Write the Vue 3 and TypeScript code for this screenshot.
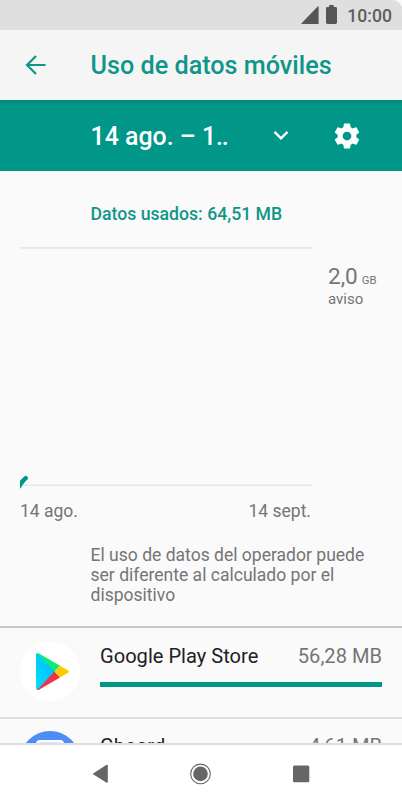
<script setup lang="ts">
interface AppUsage {
  name: string
  amount: string
  share: number
  icon: 'play' | 'keyboard'
}

const apps: AppUsage[] = [
  { name: 'Google Play Store', amount: '56,28 MB', share: 100, icon: 'play' },
  { name: 'Gboard', amount: '4,61 MB', share: 8, icon: 'keyboard' },
]
</script>

<template>
  <div class="screen">
    <div class="status">
      <svg class="signal" width="18" height="18" viewBox="0 0 18 18"><path d="M17.6 0.6V18H0.9Q0 18 .6 17.3L16.4 .7Q17.6 -.2 17.6 .6z" /></svg>
      <svg class="battery" width="11" height="19" viewBox="0 0 11 19"><path d="M3.1 0h4.6v2H9.6Q11 2 11 3.3V17.6Q11 19 9.6 19H1.4Q0 19 0 17.6V3.3Q0 2 1.4 2H3.1z" /></svg>
      <span class="clock">10:00</span>
    </div>

    <header class="appbar">
      <svg class="back" width="22" height="22" viewBox="0 0 22 22"><path d="M20.5 11H2.2M11 1.900L2 11l9 9.100" /></svg>
      <h1>Uso de datos móviles</h1>
    </header>

    <div class="cycle">
      <span class="range">14 ago. – 1<span class="dots">..</span></span>
      <svg class="chevron" width="16" height="11" viewBox="0 0 16 11"><path d="M1.5 1.8L8 8.3l6.500-6.500" /></svg>
      <svg class="gear" width="30" height="30" viewBox="0 0 24 24"><path d="M19.430 12.980c.04-.32.07-.64.07-.98s-.03-.66-.07-.98l2.110-1.650c.19-.15.24-.42.12-.64l-2-3.460c-.12-.22-.39-.3-.61-.22l-2.490 1c-.52-.4-1.080-.73-1.690-.98l-.38-2.650C14.460 2.180 14.250 2 14 2h-4c-.25 0-.46.18-.49.42l-.38 2.650c-.61.25-1.170.59-1.690.98l-2.490-1c-.23-.09-.49 0-.61.22l-2 3.460c-.13.22-.07.49.12.64l2.110 1.650c-.04.32-.07.65-.07.98s.03.66.07.98l-2.110 1.650c-.19.15-.24.42-.12.64l2 3.460c.12.22.39.3.61.22l2.490-1c.52.4 1.080.73 1.690.98l.38 2.650c.03.24.24.42.49.42h4c.25 0 .46-.18.49-.42l.38-2.650c.61-.25 1.170-.59 1.690-.98l2.490 1c.23.09.49 0 .61-.22l2-3.460c.12-.22.07-.49-.12-.64l-2.110-1.650zM12 15.500c-1.930 0-3.500-1.570-3.500-3.500s1.570-3.500 3.500-3.500 3.500 1.570 3.500 3.500-1.570 3.500-3.500 3.500z" /></svg>
    </div>

    <main class="content">
      <p class="used">Datos usados: 64,51 MB</p>
      <div class="chart">
        <svg class="plot" width="292" height="246" viewBox="0 0 292 246">
          <path class="grid" d="M0 0.900h292M0 238.200h292" />
          <path class="curve" d="M-1 239.500Q2.500 233.500 5.600 231.200" />
        </svg>
        <div class="limit">
          <div class="limit-value"><span class="number">2,0</span><span class="unit">GB</span></div>
          <div class="limit-label">aviso</div>
        </div>
      </div>
      <div class="dates"><span>14 ago.</span><span>14 sept.</span></div>
      <p class="note">El uso de datos del operador puede<br />ser diferente al calculado por el<br />dispositivo</p>

      <section class="apps">
        <div v-for="app in apps" :key="app.name" class="app">
          <svg v-if="app.icon === 'play'" class="icon" width="60" height="61" viewBox="0 0 60 61">
            <defs>
              <linearGradient id="blue" x1="0" y1="1" x2="1" y2="0"><stop offset="0" stop-color="#00e2ff" /><stop offset="1" stop-color="#00b3fa" /></linearGradient>
            </defs>
            <circle cx="30" cy="30.500" r="30" fill="#fff" />
            <g transform="translate(0 .6)">
              <path d="M16 13.500Q16 11 18 12L36 30 18 48Q16 49 16 46.500z" fill="url(#blue)" />
              <path d="M17 11.600Q18 11.200 19 11.900L40 24.200 34.500 30z" fill="#0cea78" />
              <path d="M17 48.300Q18 48.800 19 48.100L40 35.800 34.500 30z" fill="#f03448" />
              <path d="M40 24.200L48.200 28.900Q50 30 48.200 31.100L40 35.800 34.500 30z" fill="#ffcb00" />
            </g>
          </svg>
          <svg v-else class="icon" width="60" height="60" viewBox="0 0 60 60">
            <circle cx="30" cy="30" r="30" fill="#4d8df5" />
            <rect x="16" y="9" width="28" height="42" rx="4" fill="#fff" />
            <rect x="19" y="11" width="22" height="38" rx="2" fill="#dbe7fd" />
          </svg>
          <div class="usage">
            <div class="line"><span class="name">{{ app.name }}</span><span class="amount">{{ app.amount }}</span></div>
            <div class="track"><div class="bar" :style="{ width: app.share + '%' }"></div></div>
          </div>
        </div>
      </section>
    </main>

    <nav class="nav">
      <svg width="402" height="59" viewBox="0 0 402 59">
        <path d="M93.500 28.200L106.200 20Q107.800 19.200 107.800 21V36.500Q107.800 38.300 106.200 37.400L93.500 29.600Q92.500 28.900 93.500 28.200z" />
        <circle class="ring" cx="200.500" cy="28.900" r="9.800" />
        <circle cx="200.500" cy="28.900" r="7.300" />
        <rect x="293" y="20.600" width="16.300" height="16.600" rx="1.500" />
      </svg>
    </nav>
  </div>
</template>

<style>
body {
  background: #fff;
}
</style>

<style scoped>
.screen {
  width: 402px;
  height: 804px;
  overflow: hidden;
  display: flex;
  flex-direction: column;
  background: #fafafa;
  font-family: Roboto, 'Liberation Sans', sans-serif;
  color: #757575;
  white-space: nowrap;
}
h1,
p {
  margin: 0;
}
svg {
  display: block;
  flex: none;
}
.status {
  flex: none;
  height: 30px;
  box-sizing: border-box;
  padding-right: 10px;
  display: flex;
  align-items: flex-start;
  justify-content: flex-end;
  background: #dfdfdf;
  border-top-right-radius: 9px;
  fill: #555;
}
.signal {
  margin: 6px 7px 0 0;
}
.battery {
  margin: 5px 10px 0 0;
}
.clock {
  margin-top: 5px;
  line-height: 22px;
  font-size: 17.600px;
  font-weight: 500;
  color: #5d5d5d;
}
.appbar {
  flex: none;
  height: 70px;
  display: flex;
  align-items: center;
  background: #f5f5f5;
}
.back {
  margin: 0 43.500px 0 25px;
  fill: none;
  stroke: #109688;
  stroke-width: 2.200;
}
h1 {
  font-size: 25.200px;
  line-height: 30px;
  font-weight: 500;
  color: #109688;
  padding-top: 2px;
}
.cycle {
  flex: none;
  height: 71px;
  display: flex;
  align-items: center;
  background: linear-gradient(#078474, #009688 4px);
  color: #fff;
}
.range {
  width: 182.500px;
  margin-left: 90.500px;
  padding-top: 2px;
  font-size: 24.900px;
  font-weight: 500;
}
.dots {
  letter-spacing: -1.200px;
}
.chevron {
  fill: none;
  stroke: #fff;
  stroke-width: 2.400;
}
.gear {
  margin-left: 43px;
  fill: #fff;
}
.content {
  flex: 1;
  min-height: 0;
  overflow: hidden;
}
.used {
  padding: 33px 0 0 90.500px;
  height: 43px;
  line-height: 21px;
  font-size: 17.650px;
  font-weight: 500;
  color: #109688;
}
.chart {
  height: 246px;
  padding-left: 20px;
  display: flex;
}
.grid {
  stroke: #e8e8e8;
  stroke-width: 1.600;
}
.curve {
  fill: none;
  stroke: #009688;
  stroke-width: 4.500;
  stroke-linecap: round;
}
.limit {
  padding: 15px 0 0 16px;
}
.limit-value {
  display: flex;
  align-items: baseline;
  gap: 4px;
  height: 28px;
  line-height: 28px;
}
.number {
  font-size: 22.500px;
}
.unit {
  font-size: 11.300px;
}
.limit-label {
  font-size: 15px;
  line-height: 18px;
}
.dates {
  width: 291px;
  margin-left: 20px;
  padding-top: 7px;
  display: flex;
  justify-content: space-between;
  font-size: 17.500px;
  line-height: 22px;
}
.note {
  padding: 23px 0 0 90.500px;
  font-size: 17.550px;
  line-height: 20.200px;
}
.apps {
  margin-top: 20.400px;
  border-top: 2px solid #c8c8c8;
}
.app {
  height: 91px;
  box-sizing: border-box;
  padding: 13px 20px 0;
  display: flex;
  gap: 20px;
  border-bottom: 2px solid #dedede;
}
.app + .app {
  padding-top: 12px;
}
.usage {
  flex: 1;
}
.line {
  display: flex;
  justify-content: space-between;
  padding-top: 2px;
  font-size: 20.100px;
  line-height: 27px;
}
.name {
  color: #212121;
}
.track {
  margin-top: 12px;
}
.bar {
  height: 5px;
  background: #009688;
}
.nav {
  flex: none;
  height: 59px;
  border-top: 2px solid #dedede;
  background: #fff;
  fill: #666;
}
.ring {
  fill: none;
  stroke: #666;
  stroke-width: 1.100;
}
</style>
